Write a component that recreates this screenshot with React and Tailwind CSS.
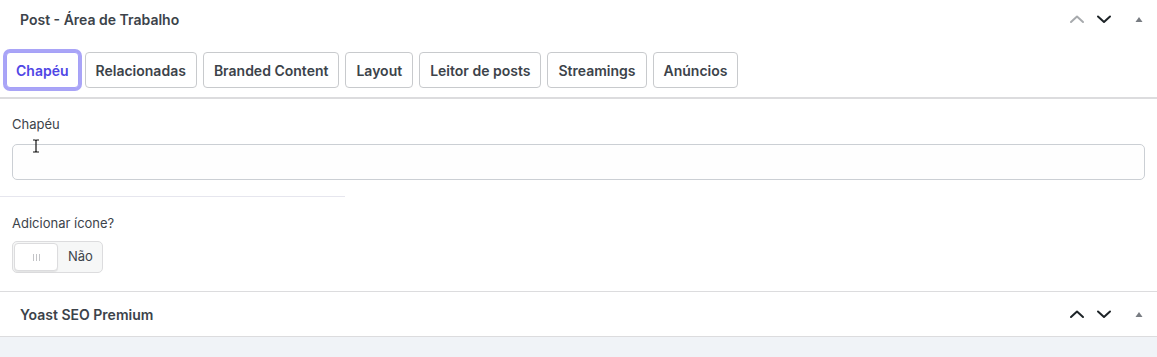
import { useState } from "react";

const tabs = ["Chapéu", "Relacionadas", "Branded Content", "Layout", "Leitor de posts", "Streamings", "Anúncios"];

const Chevron = ({ up, className }) => (
  <svg width="16" height="16" viewBox="0 0 16 16" className={className} fill="none">
    <path
      d={up ? "M2 11 L8 5.5 L14 11" : "M2 5.5 L8 11 L14 5.5"}
      stroke="currentColor"
      strokeWidth="2"
      strokeLinecap="round"
      strokeLinejoin="round"
    />
  </svg>
);

const Triangle = () => (
  <svg width="10" height="8" viewBox="0 0 10 8" className="text-[#787c82]">
    <path d="M1.5 7 L5 2 L8.5 7 Z" fill="currentColor" />
  </svg>
);

const PanelHeader = ({ title, upMuted, height }) => (
  <div className={`flex items-center justify-between pl-[20px] pr-[11px] ${height}`}>
    <h2 className="text-[14px] font-semibold text-[#3c434a]">{title}</h2>
    <div className="flex items-center">
      <Chevron up className={upMuted ? "text-[#a7aaad]" : "text-[#1d2327]"} />
      <Chevron className="text-[#1d2327] ml-[11px]" />
      <span className="ml-[22px] mr-[2px] flex">
        <Triangle />
      </span>
    </div>
  </div>
);

export default function App() {
  const [active, setActive] = useState(0);
  const [icon, setIcon] = useState(false);

  return (
    <div className="w-[1157px] h-[357px] bg-[#f0f3f7] overflow-hidden font-['Inter','Liberation_Sans',sans-serif]">
      <div className="bg-white">
        {/* Post panel */}
        <PanelHeader title="Post - Área de Trabalho" upMuted height="h-[38px]" />

        <div className="flex items-center gap-[6px] pl-[6px] pt-[14px] pb-[9px] border-b-2 border-[#dcdcde]">
          {tabs.map((t, i) => (
            <button
              key={t}
              onClick={() => setActive(i)}
              className={`h-[36px] rounded-[4px] border text-[14px] font-semibold bg-white ${
                i === active
                  ? "px-[9px] border-[#a5a1f7] text-[#4f46e5] ring-[3px] ring-[#a9a4f7]"
                  : "px-[10px] border-[#c8cacd] text-[#3c434a]"
              }`}
            >
              {t}
            </button>
          ))}
        </div>

        <div className="px-[12px] pt-[16px]">
          <label className="block text-[13px] text-[#3c434a] leading-[18px]">Chapéu</label>
          <div className="relative mt-[11px]">
            <input
              type="text"
              className="block w-[1133px] h-[36px] rounded-[5px] border border-[#cbcfd4] bg-[#fefefe] px-[8px] text-[13px] outline-none"
            />
            {/* mouse cursor */}
            <svg width="8" height="14" viewBox="0 0 8 14" className="absolute left-[20px] top-[-5px] pointer-events-none">
              <path d="M1 1 H3 Q4 1 4 2 Q4 1 5 1 H7 M4 2 V12 M1 13 H3 Q4 13 4 12 Q4 13 5 13 H7" stroke="#111" strokeWidth="1.2" fill="none" />
            </svg>
          </div>
        </div>

        <div className="mt-[16px] w-[345px] border-t border-[#e6e6ee]" />

        <div className="px-[12px] pt-[17px] pb-[18px]">
          <label className="block text-[13px] text-[#3c434a] leading-[18px]">Adicionar ícone?</label>
          <button
            onClick={() => setIcon(!icon)}
            className="mt-[9px] flex items-center h-[32px] w-[91px] rounded-[5px] border border-[#dcdcde] bg-[#f6f7f7] p-[1px]"
          >
            <span className="flex items-center justify-center w-[44px] h-full rounded-[4px] bg-white border border-[#dcdcde] shadow-[0_1px_1px_rgba(0,0,0,0.08)] gap-[2px]">
              <span className="w-px h-[7px] bg-[#c3c4c7]" />
              <span className="w-px h-[7px] bg-[#c3c4c7]" />
              <span className="w-px h-[7px] bg-[#c3c4c7]" />
            </span>
            <span className="ml-[10px] text-[13px] text-[#3c434a]">{icon ? "Sim" : "Não"}</span>
          </button>
        </div>

        {/* Yoast panel */}
        <div className="border-t border-b border-[#dcdcde]">
          <PanelHeader title="Yoast SEO Premium" height="h-[44px]" />
        </div>
      </div>
    </div>
  );
}
